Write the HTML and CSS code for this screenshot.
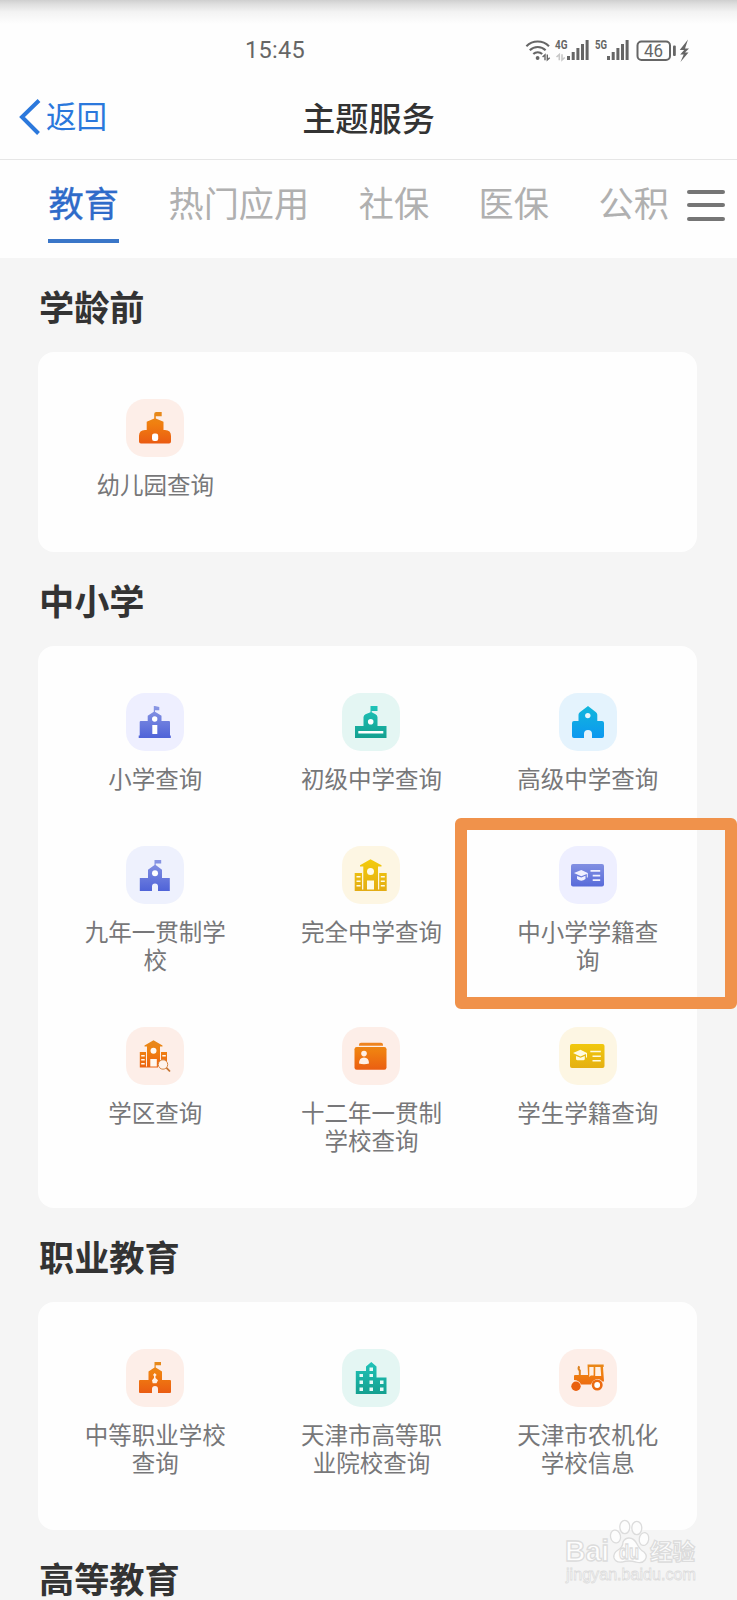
FILE: index.html
```html
<!DOCTYPE html>
<html lang="zh-CN">
<head>
<meta charset="utf-8">
<title>主题服务</title>
<link rel="stylesheet" href="styles.css">
</head>
<body>
<svg class="defs" width="0" height="0">
  <defs>
    <linearGradient id="orange" x1="0" y1="13" x2="0" y2="45" gradientUnits="userSpaceOnUse"><stop offset="0" stop-color="#e58a1c"/><stop offset=".35" stop-color="#f08010"/><stop offset="1" stop-color="#ea5a12"/></linearGradient>
    <linearGradient id="blue" x1="0" y1="13" x2="0" y2="45" gradientUnits="userSpaceOnUse"><stop offset="0" stop-color="#8b98e4"/><stop offset="1" stop-color="#4f63d8"/></linearGradient>
    <linearGradient id="green" x1="0" y1="13" x2="0" y2="45" gradientUnits="userSpaceOnUse"><stop offset="0" stop-color="#1fc3b8"/><stop offset="1" stop-color="#14a090"/></linearGradient>
    <linearGradient id="sky" x1="0" y1="13" x2="0" y2="45" gradientUnits="userSpaceOnUse"><stop offset="0" stop-color="#12b7dc"/><stop offset="1" stop-color="#0c98f0"/></linearGradient>
    <linearGradient id="gold" x1="0" y1="13" x2="0" y2="45" gradientUnits="userSpaceOnUse"><stop offset="0" stop-color="#f3cc0c"/><stop offset="1" stop-color="#e3ac14"/></linearGradient>
  </defs>
</svg>

<div class="phone">
  <header class="top">
    <div class="status">
      <span class="time">15:45</span>
      <svg class="signals" width="175" height="30" viewBox="520 35 175 30">
        <g fill="none" stroke="#666" stroke-width="2.1">
          <path d="M526.4 46.2a16 16 0 0 1 22.6 0"/>
          <path d="M529.8 50.2a11.2 11.2 0 0 1 15.8 0"/>
          <path d="M533.3 54.1a6.4 6.4 0 0 1 8.9 0"/>
        </g>
        <circle cx="537.6" cy="58" r="1.9" fill="#666"/>
        <path d="M542.600 57l2.400-2.200v5.400M547.300 54.500v5.400l2.400-2.200" fill="none" stroke="#666" stroke-width="1.400"/>
        <text x="555" y="49.300" class="net" textLength="12.500" lengthAdjust="spacingAndGlyphs">4G</text>
        <path d="M556.500 57l2.800-2.400v5.600M562 54.300v5.600l2.800-2.400" fill="none" stroke="#c8c8c8" stroke-width="1.600"/>
        <g fill="#666">
          <rect x="567" y="56" width="3" height="4"/><rect x="571.7" y="52" width="3" height="8"/><rect x="576.4" y="48" width="3" height="12"/><rect x="581" y="44" width="3" height="16"/><rect x="585.6" y="40" width="3" height="20"/>
          <rect x="607" y="56" width="3" height="4"/><rect x="611.7" y="52" width="3" height="8"/><rect x="616.4" y="48" width="3" height="12"/><rect x="621" y="44" width="3" height="16"/><rect x="625.6" y="40" width="3" height="20"/>
          <rect x="673" y="45.5" width="2.8" height="10.5" rx="1"/>
          <path d="M688 39.500l-8.300 10.500h4.500l-4 4.500h3.500l-3.200 7.500 8-9.500h-3.500l4-4h-4z"/>
        </g>
        <text x="595" y="49.300" class="net" textLength="12" lengthAdjust="spacingAndGlyphs">5G</text>
        <rect x="637.500" y="41.500" width="32.500" height="18.500" rx="4" fill="none" stroke="#666" stroke-width="2"/>
        <text x="644" y="56.700" class="level" textLength="19" lengthAdjust="spacingAndGlyphs">46</text>
      </svg>
    </div>
    <div class="navbar">
      <a class="back">
        <svg width="22" height="36" viewBox="0 0 22 36"><path d="M20 1.500L3 18L19.500 34.500" fill="none" stroke="#2b78dc" stroke-width="4"/></svg>
        <span>返回</span>
      </a>
      <h1 class="title">主题服务</h1>
    </div>
    <nav class="tabs">
      <a class="tab active">教育</a><a class="tab">热门应用</a><a class="tab">社保</a><a class="tab">医保</a><a class="tab">公积</a>
      <span class="menu"><i></i><i></i><i></i></span>
    </nav>
  </header>

  <main>
    <h2 class="heading">学龄前</h2>
    <section class="card">
      <div class="item"><svg class="tile peach" viewBox="0 0 58 58">
        <path fill="url(#orange)" d="M28.200 19.500V15q0-2 2-2h5.500v4.300h-5.900v2.200l7.700 3.200V31H39q6 0 6 6v5.500q0 2-2 2H15q-2 0-2-2V37q0-6 6-6h1.700v-8.300z"/>
        <rect x="26" y="34.500" width="6.200" height="7.500" rx="2.200" fill="#fff"/></svg>
        <span class="label">幼儿园查询</span></div>
    </section>

    <h2 class="heading">中小学</h2>
    <section class="card">
      <div class="item"><svg class="tile lilac" viewBox="0 0 58 58">
        <path fill="url(#blue)" d="M27.800 13h1.200l4.300 1v3.200H29v1.500l6.500 4V28H43q1 0 1 1v13.500h.8V45H12.700v-2.500h1V29q0-1 1-1h7v-5.300l6.100-4z"/>
        <circle cx="28.700" cy="26" r="2.700" fill="#fff"/><rect x="26.300" y="32" width="5" height="9" fill="#fff"/></svg>
        <span class="label">小学查询</span></div>
      <div class="item"><svg class="tile mint" viewBox="0 0 58 58">
        <path fill="url(#green)" d="M28.500 13h7v5h-5.800v1.300l3.800 2q2 1 2 3V33h9v12H13V33h8.500v-8.700q0-2 2-3l5-2z"/>
        <circle cx="28.700" cy="28.800" r="2.800" fill="#fff"/><rect x="16.300" y="38" width="25" height="2.500" fill="#fff"/></svg>
        <span class="label">初级中学查询</span></div>
      <div class="item"><svg class="tile ice" viewBox="0 0 58 58">
        <path fill="url(#sky)" d="M29 13l8 6.300q1.300 1 1.300 2.500V28H43q2 0 2 2v13q0 2-2 2H33v-4q0-4-4-4t-4 4v4H15q-2 0-2-2V30q0-2 2-2h4.500v-6.200q0-1.500 1.300-2.500z"/>
        <circle cx="28.800" cy="22.600" r="2.700" fill="#e8f8fd"/></svg>
        <span class="label">高级中学查询</span></div>

      <div class="item"><svg class="tile pale" viewBox="0 0 58 58">
        <path fill="url(#blue)" d="M28.500 14h6.700v3.500h-5.500V19l6.300 4.700V32h7.800v13H32v-4.500q0-3-3-3t-3 3V45H13.800V32H22v-8.300l6.500-4.700z"/>
        <circle cx="29" cy="27.200" r="3" fill="#fff"/></svg>
        <span class="label">九年一贯制学校</span></div>
      <div class="item"><svg class="tile cream" viewBox="0 0 58 58">
        <path fill="url(#gold)" d="M28.500 13.300L39.500 19.300V20.500H36V43.500H37.200V27H44.700V45H12.700V27H20V43.500H21.300V20.500H18V19.300z"/>
        <g fill="#fffbe8"><circle cx="28.500" cy="25.600" r="3.500"/><rect x="25" y="34.500" width="7" height="9"/><path d="M14.500 30h4v1.500h-4zM14.500 34.500h4v1.500h-4zM14.500 39h4v1.500h-4zM38.800 30h4v1.500h-4zM38.800 34.500h4v1.500h-4zM38.800 39h4v1.500h-4z"/></g></svg>
        <span class="label">完全中学查询</span></div>
      <div class="item"><svg class="tile lilac" viewBox="0 0 58 58">
        <rect x="12" y="18" width="33" height="22.500" rx="2" fill="url(#blue)"/>
        <g fill="#f0f0ff"><path d="M15 27l7.300-3 6.500 3v4.500h-1V28l-5.500 2.300z"/><path d="M18 30l4.300 1.600 4.200-1.800v3.200q-4.200 3.500-8.500 0z"/><path d="M31.500 24h9.700v1.700h-9.700zM33.700 28.700h7.500v1.700h-7.500zM33.700 33.300h7.500V35h-7.500z"/></g></svg>
        <span class="label">中小学学籍查询</span></div>

      <div class="item"><svg class="tile peach" viewBox="0 0 58 58">
        <path fill="url(#orange)" d="M27.500 13.300L36.500 18.500V19.500H34V39.500H35V25H41V34.500Q31 32 32 40.500H13.800V25H20V39.500H21V19.500H18.500V18.500z"/>
        <g fill="#fff8f0"><circle cx="27.500" cy="23.800" r="3"/><rect x="24.300" y="32" width="6.500" height="7.500"/><path d="M15.200 28h3.500v1.500h-3.500zM15.200 32h3.500v1.500h-3.500zM15.200 36h3.500v1.500h-3.500zM36.300 28h3.500v1.500h-3.500z"/></g>
        <circle cx="37" cy="37.500" r="4.700" fill="#fff3ec" stroke="#d58540" stroke-width="1"/><path d="M40.500 40.800l3.500 3.700" stroke="#c77532" stroke-width="1.800"/></svg>
        <span class="label">学区查询</span></div>
      <div class="item"><svg class="tile peach" viewBox="0 0 58 58">
        <path d="M17 18.800v-1q0-2 2-2h20q2 0 2 2v1z" fill="#ee8420"/>
        <rect x="12.500" y="20" width="32" height="22.700" rx="2.200" fill="url(#orange)"/>
        <circle cx="22" cy="26.600" r="2.800" fill="#fff0e5"/><path d="M17 36.500q0-6 5-6t5 6q-5 1.500-10 0z" fill="#fff0e5"/></svg>
        <span class="label">十二年一贯制学校查询</span></div>
      <div class="item"><svg class="tile cream" viewBox="0 0 58 58">
        <rect x="11" y="17" width="34.500" height="24" rx="2" fill="url(#gold)"/>
        <g fill="#fffbe0"><path d="M14 26l7.500-3.200 6.500 3.200v4.500h-1V27l-5.500 2.500z"/><path d="M17 29l4.500 1.700 4.300-1.800v3.300q-.5 1-1.300 1h-6.200q-.8 0-1.300-1z"/><path d="M31.300 23.700h10.500v1.600h-10.500zM33.500 28.500h8.300v1.600h-8.300zM33.500 33h8.300v1.600h-8.300z"/></g></svg>
        <span class="label">学生学籍查询</span></div>
    </section>

    <h2 class="heading">职业教育</h2>
    <section class="card">
      <div class="item"><svg class="tile peach" viewBox="0 0 58 58">
        <path fill="url(#orange)" d="M28.500 13H35v3.300h-5.300v2.200l6.300 4V31h8q1 0 1 1v11q0 1-1 1H32v-4q0-3-3-3t-3 3v4H14q-1 0-1-1V32q0-1 1-1h8.500v-8.500l6-4z"/>
        <path d="M28.700 24l2 2-1.200 1v2l2.500 2.200-1.500 3h-3.800L26 31.200l2-2.200v-2l-1-1z" fill="#fff0e4"/></svg>
        <span class="label">中等职业学校查询</span></div>
      <div class="item"><svg class="tile mint" viewBox="0 0 58 58">
        <path fill="url(#green)" d="M29.300 13l5.200 4.500v11h10V45H13.800V22H24v-4.500z"/>
        <path fill="#e6faf7" d="M27.500 18.500h3.500V22h-3.500zM17.500 25H21v3h-3.500zM27.500 25H31v3h-3.500zM17.500 31.500H21V35h-3.500zM27.500 31.500H31V35h-3.500zM38 31.500h3.500V35H38zM17.500 38.500H21V42h-3.500zM27.500 38.500H31V42h-3.500zM38 38.500h3.500V42H38z"/></svg>
        <span class="label">天津市高等职业院校查询</span></div>
      <div class="item"><svg class="tile peach" viewBox="0 0 58 58">
        <path d="M28.500 15.500H44.700V18H44L45 32.500H43.500Q38 27 32 35.500H22Q20 31 15 31V27q0-1 1-1H29z" fill="url(#orange)"/>
        <path d="M30.300 18h4.300v8.500h-2.800l-1.500 1.500zM36.300 18h5.200l.7 9h-6z" fill="#fff0e4"/>
        <path d="M20.800 26V21.500Q18.700 20 20.200 17.200" stroke="#dc8120" stroke-width="2" fill="none"/>
        <circle cx="17" cy="37.300" r="4.700" fill="#e9600f"/><circle cx="38.200" cy="36" r="5.800" fill="#fff0e8"/><circle cx="38.200" cy="36" r="4.200" fill="#fff" stroke="#ec6b12" stroke-width="2.600"/></svg>
        <span class="label">天津市农机化学校信息</span></div>
    </section>
    <h2 class="heading last">高等教育</h2>
  </main>

  <div class="callout"></div>
  <svg class="watermark" width="140" height="76" viewBox="560 1512 140 76">
    <g fill="#fdfdfd" stroke="#dcdcdc" stroke-width="1.300">
      <text x="565" y="1561" class="mark" textLength="44" lengthAdjust="spacingAndGlyphs">Bai</text>
      <ellipse cx="615.500" cy="1536.500" rx="5" ry="6.500" transform="rotate(-12 615.500 1536.500)"/>
      <ellipse cx="624.800" cy="1527" rx="5" ry="6.700"/>
      <ellipse cx="636.800" cy="1528" rx="5" ry="6.700"/>
      <ellipse cx="644" cy="1539" rx="4.700" ry="6.500" transform="rotate(10 644 1539)"/>
      <path d="M629 1538q5 0 8 6t7 8q4 4 1 8-3 4-9 2-7-2-14 0-6 1-8-4-1-5 4-8t5-8q2-4 6-4z"/>
      <text x="619" y="1559" class="du" textLength="20" lengthAdjust="spacingAndGlyphs">du</text>
      <text x="650" y="1560" class="cn">经验</text>
      <text x="566" y="1580" class="url" textLength="130" lengthAdjust="spacingAndGlyphs">jingyan.baidu.com</text>
    </g>
  </svg>
</div>
</body>
</html>
```

FILE: styles.css
```css
* { box-sizing: border-box; }
html, body { height: 1600px; overflow: hidden; }
body {
  margin: 0;
  background: #f5f5f5;
  font-family: "Noto Sans CJK SC", sans-serif;
}
h1, h2 { margin: 0; }
.defs { position: absolute; }
.phone {
  position: relative;
  width: 737px;
  height: 1600px;
  overflow: hidden;
}

.top {
  height: 257.5px;
  background: linear-gradient(#cfcfcf 0, #dedede 4px, #f3f3f3 12px, #fefefe 24px);
}
.status {
  display: flex;
  justify-content: space-between;
  height: 80px;
  padding: 35px 42px 0 245px;
}
.time {
  font: 400 23.5px/31px Roboto, sans-serif;
  letter-spacing: .3px;
  color: #666;
}
.net { font: 700 12.5px Roboto, sans-serif; fill: #666; }
.level { font: 400 18px Roboto, sans-serif; fill: #666; }

.navbar {
  display: grid;
  grid-template-columns: 1fr auto 1fr;
  align-items: center;
  height: 80px;
  padding: 0 19px;
  border-bottom: 1px solid #e6e6e6;
}
.back {
  display: flex;
  align-items: center;
  gap: 5px;
  font-size: 30.5px;
  line-height: 44px;
  color: #2b78dc;
}
.back svg { margin-top: -5px; }
.back span { margin-top: -9px; }
.title {
  margin-top: -6px;
  font-size: 33.2px;
  line-height: 48px;
  font-weight: 500;
  color: #333;
}

.tabs {
  display: flex;
  align-items: flex-start;
  gap: 49.5px;
  height: 97.5px;
  padding: 17px 12px 0 48px;
}
.tab {
  height: 66px;
  font-size: 35.2px;
  line-height: 50px;
  color: #b0b0b0;
  white-space: nowrap;
}
.tab.active {
  width: 71px;
  padding-left: .6px;
  color: #2f6bc9;
  border-bottom: 4px solid #3a76c8;
  -webkit-text-stroke: .35px #2f6bc9;
}
.menu {
  display: flex;
  flex-direction: column;
  gap: 9.3px;
  margin: 13px 0 0 -31px;
}
.menu i {
  width: 38px;
  height: 4px;
  border-radius: 2px;
  background: #757575;
}

.heading {
  height: 94px;
  padding: 25px 0 0 39px;
  font-size: 35.2px;
  line-height: 45px;
  font-weight: 700;
  color: #333;
}
.heading.last { height: 70px; }
.card {
  display: grid;
  grid-template-columns: repeat(3, 216.3px);
  width: 659px;
  margin-left: 38px;
  padding: 47px 0 0 9px;
  border-radius: 16px;
  background: #fefefe;
}
.item {
  display: flex;
  flex-direction: column;
  align-items: center;
  gap: 13.5px;
  padding-bottom: 53.5px;
}
.tile {
  width: 58px;
  height: 58px;
  border-radius: 19px;
}
.peach { background: #fdeee8; }
.lilac { background: #eeefff; }
.pale { background: #eef1fd; }
.mint { background: #e4f6f3; }
.ice { background: #e4f3fd; }
.cream { background: #fdf6e3; }
.label {
  width: 146px;
  font-size: 23.5px;
  line-height: 28px;
  text-align: center;
  color: #777779;
}

.callout {
  position: absolute;
  left: 455px;
  top: 818px;
  width: 282px;
  height: 191px;
  border: 12px solid #f0924b;
  border-radius: 6px;
}
.watermark {
  position: absolute;
  left: 560px;
  top: 1512px;
  overflow: visible;
}
.mark { font: 700 29px "Liberation Sans", sans-serif; }
.du { font: 700 20px "Liberation Sans", sans-serif; }
.cn { font: 700 22.5px "Noto Sans CJK SC", sans-serif; }
.url { font: 400 17px "Liberation Sans", sans-serif; stroke-width: .8px; }
```
